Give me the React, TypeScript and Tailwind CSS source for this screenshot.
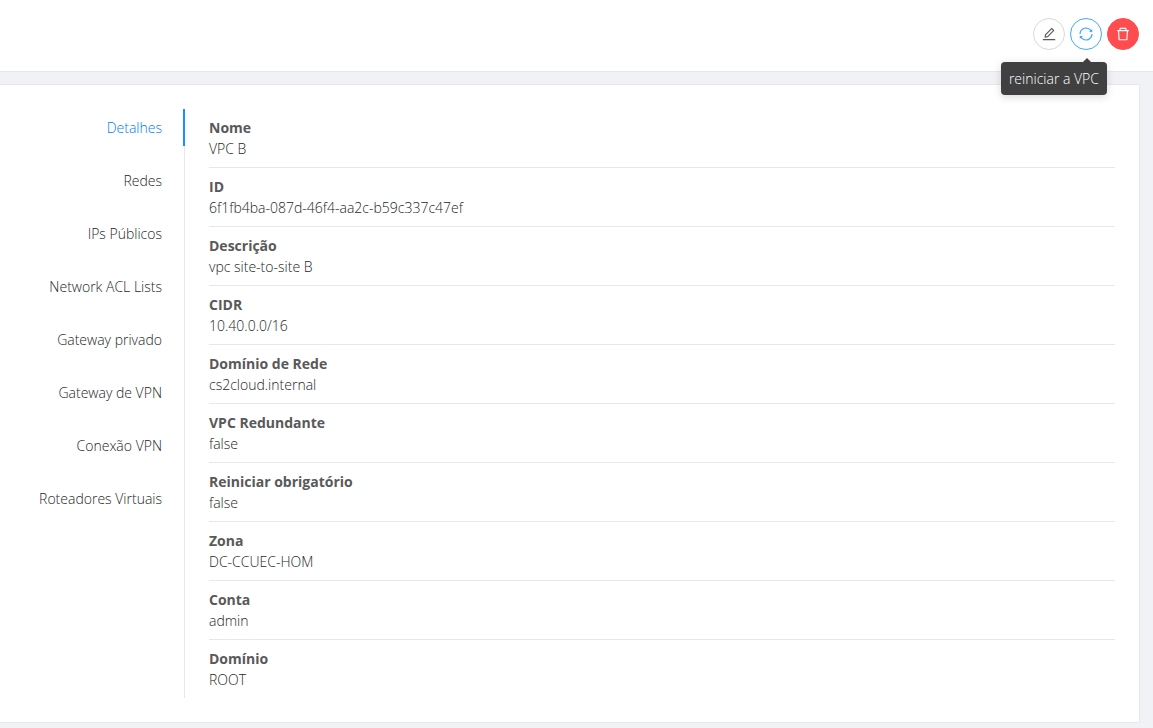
import React, { useState } from "react";
import { AiOutlineDelete, AiOutlineEdit, AiOutlineSync } from "react-icons/ai";

const tabs = [
  "Detalhes",
  "Redes",
  "IPs Públicos",
  "Network ACL Lists",
  "Gateway privado",
  "Gateway de VPN",
  "Conexão VPN",
  "Roteadores Virtuais",
];

const details: { label: string; value: string }[] = [
  { label: "Nome", value: "VPC B" },
  { label: "ID", value: "6f1fb4ba-087d-46f4-aa2c-b59c337c47ef" },
  { label: "Descrição", value: "vpc site-to-site B" },
  { label: "CIDR", value: "10.40.0.0/16" },
  { label: "Domínio de Rede", value: "cs2cloud.internal" },
  { label: "VPC Redundante", value: "false" },
  { label: "Reiniciar obrigatório", value: "false" },
  { label: "Zona", value: "DC-CCUEC-HOM" },
  { label: "Conta", value: "admin" },
  { label: "Domínio", value: "ROOT" },
];

const roundButton =
  "flex size-8 cursor-pointer items-center justify-center rounded-full border text-base";

function Toolbar() {
  return (
    <header className="flex justify-end gap-[5px] border-b border-[#e8e8e8] bg-white pt-[18px] pr-3.5 pb-[21px]">
      <button type="button" aria-label="Editar" className={`${roundButton} border-[#d9d9d9] bg-white text-[#595959]`}>
        <AiOutlineEdit />
      </button>
      <div className="relative">
        <button
          type="button"
          aria-describedby="restart-tip"
          aria-label="reiniciar a VPC"
          className={`${roundButton} border-[#40a9ff] bg-white text-[#40a9ff]`}
        >
          <AiOutlineSync />
        </button>
        <div
          id="restart-tip"
          role="tooltip"
          className="absolute top-11 -right-[5px] z-10 rounded bg-[#404040] px-2 py-1.5 leading-[21px] whitespace-nowrap text-white shadow-[0_2px_8px_rgba(0,0,0,0.15)]"
        >
          <svg viewBox="0 0 8 4" className="absolute -top-1 right-4 h-1 w-2 fill-[#404040]" aria-hidden="true">
            <path d="M0 4L4 0L8 4Z" />
          </svg>
          reiniciar a VPC
        </div>
      </div>
      <button type="button" aria-label="Excluir" className={`${roundButton} border-[#ff4d4f] bg-[#ff4d4f] text-white`}>
        <AiOutlineDelete />
      </button>
    </header>
  );
}

export default function App() {
  const [active, setActive] = useState("Detalhes");

  return (
    <div className="min-h-screen bg-[#f0f2f5] font-['Open_Sans','Noto_Sans',sans-serif] text-sm font-light text-[#262626]">
      <Toolbar />
      <main className="pt-3 pr-[13px] pb-[5px]">
        <section className="flex rounded-r-xs border-y border-r border-[#e8e8e8] bg-white py-6 pr-6">
          <nav className="flex w-[185px] shrink-0 flex-col gap-4 border-r border-[#e8e8e8]">
            {tabs.map((tab) => (
              <button
                key={tab}
                type="button"
                onClick={() => setActive(tab)}
                className={`-mr-px cursor-pointer border-r-2 py-2 pr-[21px] text-right leading-[21px] ${
                  tab === active ? "border-[#1890ff] text-[#007bff]" : "border-transparent"
                }`}
              >
                {tab}
              </button>
            ))}
          </nav>
          <dl className="ml-6 flex-1 divide-y divide-[#e8e8e8]">
            {details.map(({ label, value }) => (
              <div key={label} className="py-2 leading-[21px]">
                <dt className="font-bold text-[#595959]">{label}</dt>
                <dd>{value}</dd>
              </div>
            ))}
          </dl>
        </section>
      </main>
    </div>
  );
}
